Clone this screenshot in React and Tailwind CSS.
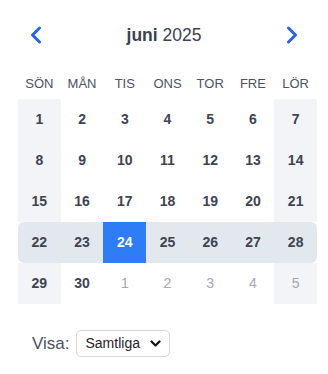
import React, { useState } from 'react'

const weekdays = ['SÖN', 'MÅN', 'TIS', 'ONS', 'TOR', 'FRE', 'LÖR']

// June 2025 starts on a Sunday
const weeks = [
  [1, 2, 3, 4, 5, 6, 7],
  [8, 9, 10, 11, 12, 13, 14],
  [15, 16, 17, 18, 19, 20, 21],
  [22, 23, 24, 25, 26, 27, 28],
  [29, 30, 1, 2, 3, 4, 5],
]

const selected = 24
const selectedWeek = 3

function Chevron({ dir }) {
  return (
    <svg width="14" height="18" viewBox="0 0 14 18" fill="none">
      <path
        d={dir === 'left' ? 'M10.5 2 L3.5 9 L10.5 16' : 'M3.5 2 L10.5 9 L3.5 16'}
        stroke="#2563eb"
        strokeWidth="3"
        strokeLinecap="round"
        strokeLinejoin="round"
      />
    </svg>
  )
}

export default function App() {
  const [filter, setFilter] = useState('all')

  return (
    <div className="w-[328px] h-[374px] bg-white pt-[18px] font-['Liberation_Sans',Arial,sans-serif]">
      {/* Month header */}
      <div className="flex items-center justify-between h-[34px] px-[29px] mb-[18px]">
        <button className="flex items-center justify-center">
          <Chevron dir="left" />
        </button>
        <h2 className="text-[17.5px] text-[#3b4250]">
          <span className="font-bold">juni</span> 2025
        </h2>
        <button className="flex items-center justify-center">
          <Chevron dir="right" />
        </button>
      </div>

      {/* Weekday labels */}
      <div className="grid grid-cols-7 w-[299px] mx-[18px] h-[28px] items-center">
        {weekdays.map((d) => (
          <div key={d} className="text-center text-[13px] text-[#4b5260]">
            {d}
          </div>
        ))}
      </div>

      {/* Days */}
      <div className="w-[299px] mx-[18px] mt-px">
        {weeks.map((week, wi) => {
          const isSelWeek = wi === selectedWeek
          return (
            <div
              key={wi}
              className={`grid grid-cols-7 h-[41px] ${isSelWeek ? 'bg-[#e3e8ef] rounded-md overflow-hidden' : ''}`}
            >
              {week.map((day, di) => {
                const outside = wi === 4 && di > 1
                const weekend = di === 0 || di === 6
                const isSel = isSelWeek && day === selected
                let cls = 'flex items-center justify-center text-[14px] '
                if (isSel) cls += 'bg-[#2f7df6] text-white font-bold'
                else if (outside) cls += 'text-[#a3a7ae] font-normal'
                else cls += 'text-[#3d4451] font-bold'
                if (!isSelWeek && weekend && !isSel) cls += ' bg-[#f2f4f8]'
                return (
                  <div key={di} className={cls}>
                    {day}
                  </div>
                )
              })}
            </div>
          )
        })}
      </div>

      {/* Filter */}
      <div className="flex items-center gap-[6px] mt-[26px] ml-[32px]">
        <label className="text-[17px] text-[#4b5260]">Visa:</label>
        <div className="relative">
          <select
            value={filter}
            onChange={(e) => setFilter(e.target.value)}
            className="appearance-none h-[27px] w-[94px] pl-[9px] pr-6 text-[14px] text-[#1f2328] bg-white border border-[#d4d7dc] rounded-[5px]"
          >
            <option value="all">Samtliga</option>
          </select>
          <svg
            className="absolute right-[9px] top-[10px] pointer-events-none"
            width="11"
            height="8"
            viewBox="0 0 11 8"
            fill="none"
          >
            <path d="M1.5 1.5 L5.5 5.5 L9.5 1.5" stroke="#111" strokeWidth="2.2" strokeLinecap="round" strokeLinejoin="round" />
          </svg>
        </div>
      </div>
    </div>
  )
}
